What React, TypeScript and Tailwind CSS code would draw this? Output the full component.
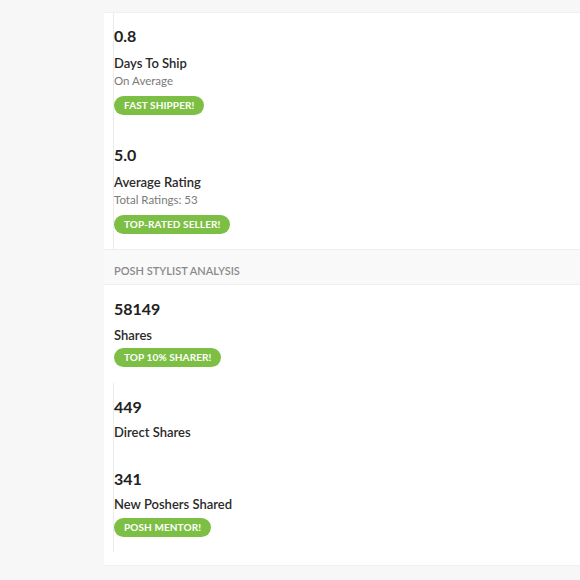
const font = { fontFamily: "Lato, 'Open Sans', sans-serif" };

function Badge({ label, className = "" }: { label: string; className?: string }) {
  return (
    <div
      className={`inline-flex h-[19px] items-center rounded-full bg-[#7cbf44] px-[10px] text-[10px] font-bold uppercase tracking-[0.1px] text-white ${className}`}
    >
      {label}
    </div>
  );
}

function Stat({
  value,
  title,
  sub,
  badge,
  titleGap = "mt-[8px]",
  badgeGap = "mt-[7px]",
}: {
  value: string;
  title: string;
  sub?: string;
  badge?: string;
  titleGap?: string;
  badgeGap?: string;
}) {
  return (
    <div className="flex flex-col items-start">
      <div className="text-[16px] font-bold leading-[20px] text-[#222]">{value}</div>
      <div className={`${titleGap} text-[13px] font-semibold leading-[18px] text-[#2a2a2a]`}>{title}</div>
      {sub && <div className="mt-[1px] text-[11.5px] leading-[16px] text-[#7a7a7a]">{sub}</div>}
      {badge && <Badge label={badge} className={badgeGap} />}
    </div>
  );
}

export default function App() {
  return (
    <div className="min-h-[580px] w-[580px] overflow-hidden bg-[#f8f7f7] pt-[12px]" style={font}>
      <div className="ml-[104px] border-y border-[#f1f0ef] bg-white pb-[13px]">
        <div className="ml-[9px] flex flex-col gap-[30px] border-l border-[#ececec] pb-[15px] pt-[13px]">
          <Stat value="0.8" title="Days To Ship" sub="On Average" badge="Fast Shipper!" />
          <Stat value="5.0" title="Average Rating" sub="Total Ratings: 53" badge="Top-Rated Seller!" />
        </div>
        <div className="border-y border-[#efeeee] bg-[#faf9f9] pb-[6px] pl-[10px] pt-[14px] text-[11px] font-semibold uppercase leading-[14px] text-[#8a8a8a]">
          Posh Stylist Analysis
        </div>
        <div className="ml-[10px] pt-[14px]">
          <Stat value="58149" title="Shares" titleGap="mt-[7px]" badge="Top 10% Sharer!" badgeGap="mt-[4px]" />
        </div>
        <div className="ml-[9px] mt-[16px] flex flex-col gap-[28px] border-l border-[#ececec] pb-[15px] pt-[14px]">
          <Stat value="449" title="Direct Shares" titleGap="mt-[6px]" />
          <Stat value="341" title="New Poshers Shared" titleGap="mt-[6px]" badge="Posh Mentor!" badgeGap="mt-[5px]" />
        </div>
      </div>
    </div>
  );
}
